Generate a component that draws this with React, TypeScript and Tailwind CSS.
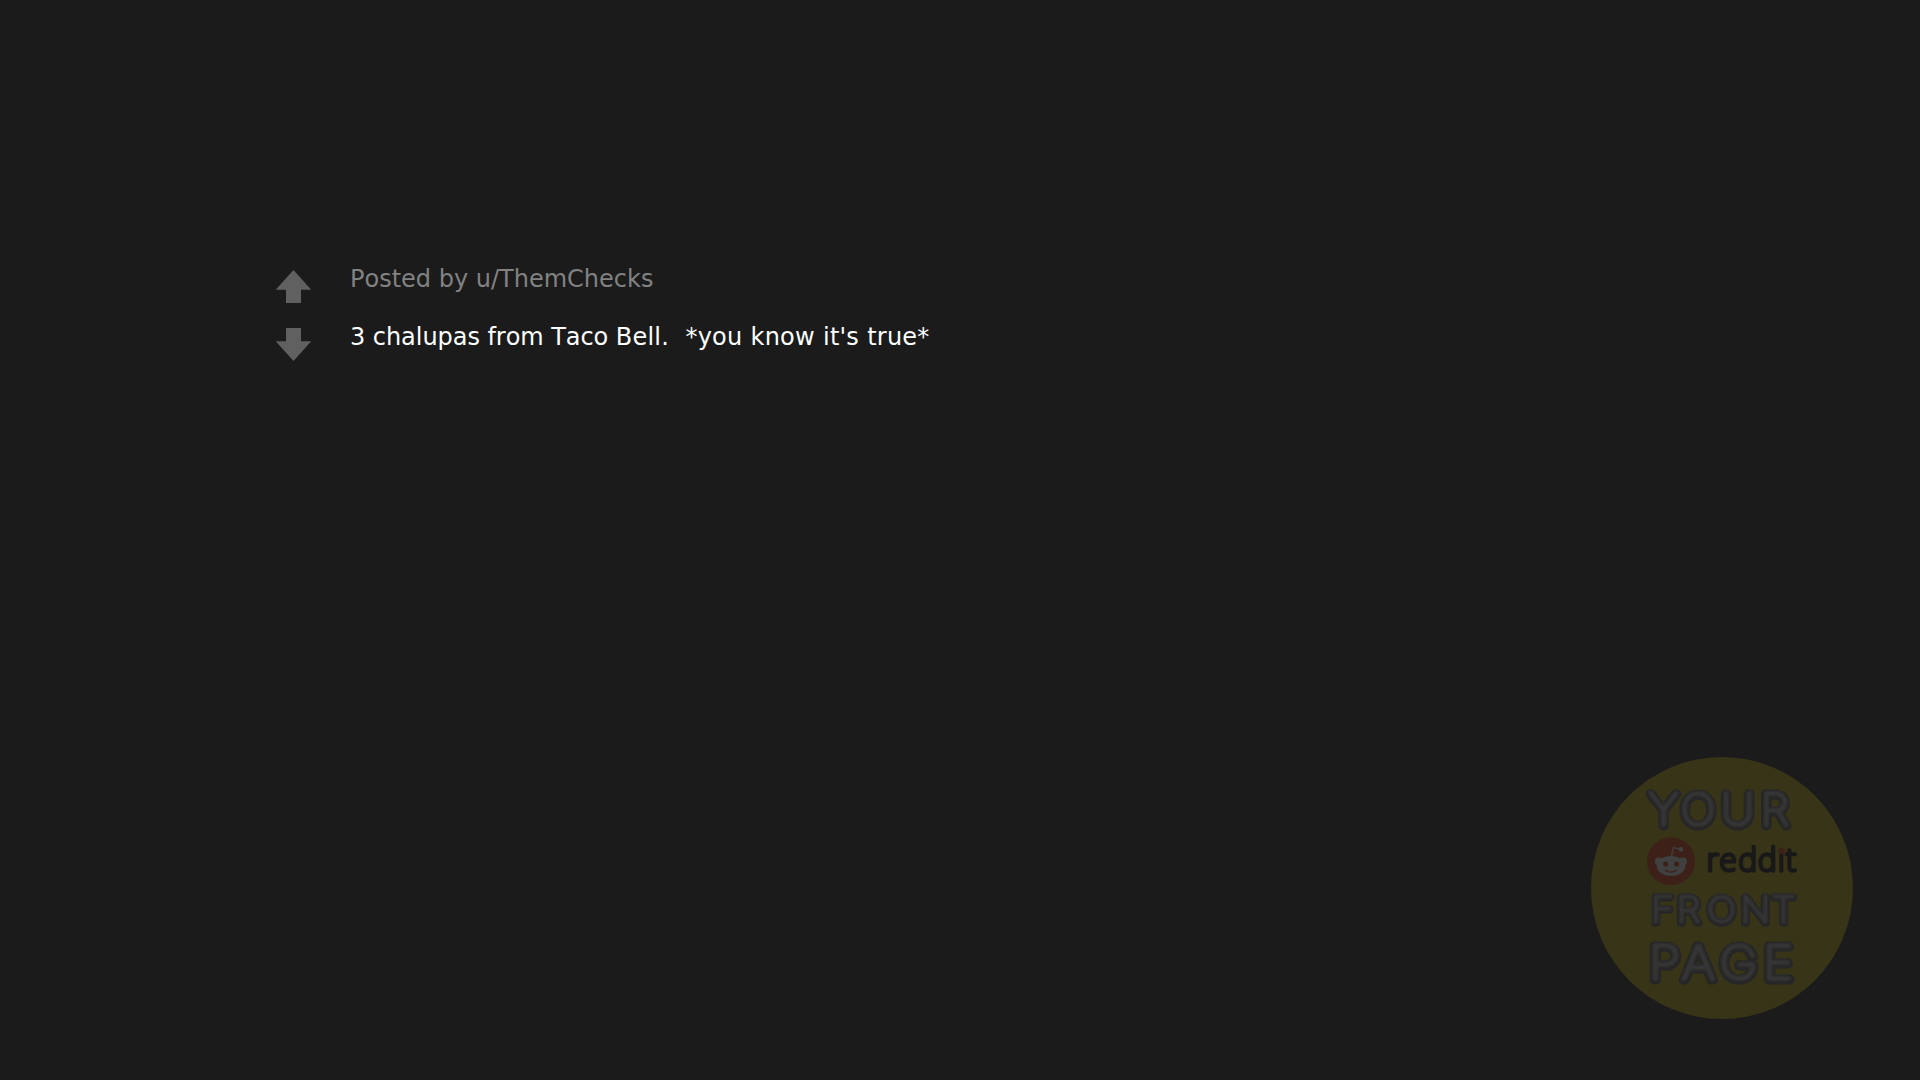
const words = [
  { text: "YOUR", x: "65.6 95.9 134.4 172", y: 80, size: 44, edge: 9, core: 3.6, transform: "scale(1.05 1)" },
  { text: "FRONT", x: "65.4 88.8 116.8 147.5 176", y: 176.8, size: 35, edge: 7.5, core: 2.8, transform: "scale(1.09 1)" },
  { text: "PAGE", x: "62.2 92 126 165", y: 234, size: 46, edge: 9.2, core: 3.6, transform: "scale(1.11 1)" },
];

function Arrow({ down = false }: { down?: boolean }) {
  return (
    <svg width="37" height="33" viewBox="0 0 37 33">
      <path d={down ? "M18.5 33 L36.2 13.3 H26 V0 H11 V13.3 H0.7 Z" : "M18.5 0 L36.2 19.7 H26 V33 H11 V19.7 H0.7 Z"} fill="#606060" />
    </svg>
  );
}

function Badge() {
  return (
    <svg width="284" height="284" viewBox="0 0 284 284" className="absolute left-[1580px] top-[746px]">
      <defs>
        <filter id="soft" x="-10%" y="-10%" width="120%" height="120%">
          <feGaussianBlur stdDeviation="0.9" />
        </filter>
        <filter id="edge" x="-10%" y="-10%" width="120%" height="120%">
          <feGaussianBlur stdDeviation="0.4" />
        </filter>
      </defs>
      <circle cx="142" cy="142" r="131" fill="#383418" />
      {words.map((w) => (
        <g key={w.text} transform={w.transform} fontFamily="Inter, sans-serif" fontWeight="100" fontSize={w.size} strokeLinejoin="round" strokeLinecap="round">
          <text x={w.x} y={w.y} fill="#272727" stroke="#272727" strokeWidth={w.edge} filter="url(#edge)">
            {w.text}
          </text>
          <text aria-hidden="true" x={w.x} y={w.y} dy="-0.8" fill="#353535" stroke="#353535" strokeWidth={w.core} filter="url(#soft)">
            {w.text}
          </text>
        </g>
      ))}
      <circle cx="91" cy="115.3" r="24" fill="#3d2018" />
      <g fill="#404040">
        <circle cx="79" cy="115.5" r="4" />
        <circle cx="103" cy="115.5" r="4" />
        <ellipse cx="91" cy="120" rx="14.3" ry="10" />
        <circle cx="101" cy="103.4" r="2.3" />
        <path d="M91.5 110 L93.3 101.6 L100 103.2" fill="none" stroke="#404040" strokeWidth="1.3" strokeLinejoin="round" />
      </g>
      <circle cx="85.6" cy="118" r="2.6" fill="#3d2018" />
      <circle cx="96.6" cy="118" r="2.6" fill="#3d2018" />
      <path d="M85.5 124.3 Q91 128 96.5 124.3" fill="none" stroke="#3d2018" strokeWidth="1.3" strokeLinecap="round" />
      <text x="126.8 139.4 158.4 177.9 198 206" y="125.3" fontFamily="Noto Sans, sans-serif" fontWeight="100" fontSize="31.3" fill="#181818" stroke="#181818" strokeWidth="3.3" strokeLinejoin="round">
        reddit
      </text>
      <circle cx="201.4" cy="103.2" r="3.4" fill="#383418" />
      <circle cx="201.4" cy="105" r="3.3" fill="#3d2018" />
    </svg>
  );
}

export default function App() {
  return (
    <main className="relative h-[1080px] w-[1920px] overflow-hidden bg-[#1b1b1b]">
      <article className="flex pl-[275px] pt-[260px]">
        <div className="flex w-[75px] flex-col gap-[25px] pt-[10px]">
          <Arrow />
          <Arrow down />
        </div>
        <div className="flex flex-col font-['DejaVu_Sans',sans-serif] text-[24px] [font-kerning:none]">
          <p className="h-[58px] whitespace-pre leading-[38px] text-[#828282]">Posted by u/ThemChecks</p>
          <p className="whitespace-pre leading-[38px] tracking-[-0.05px] text-white">3 chalupas from Taco <span className="tracking-[0.2px] [word-spacing:0.4px]">{"Bell.  *you know it's true*"}</span></p>
        </div>
      </article>
      <Badge />
    </main>
  );
}
